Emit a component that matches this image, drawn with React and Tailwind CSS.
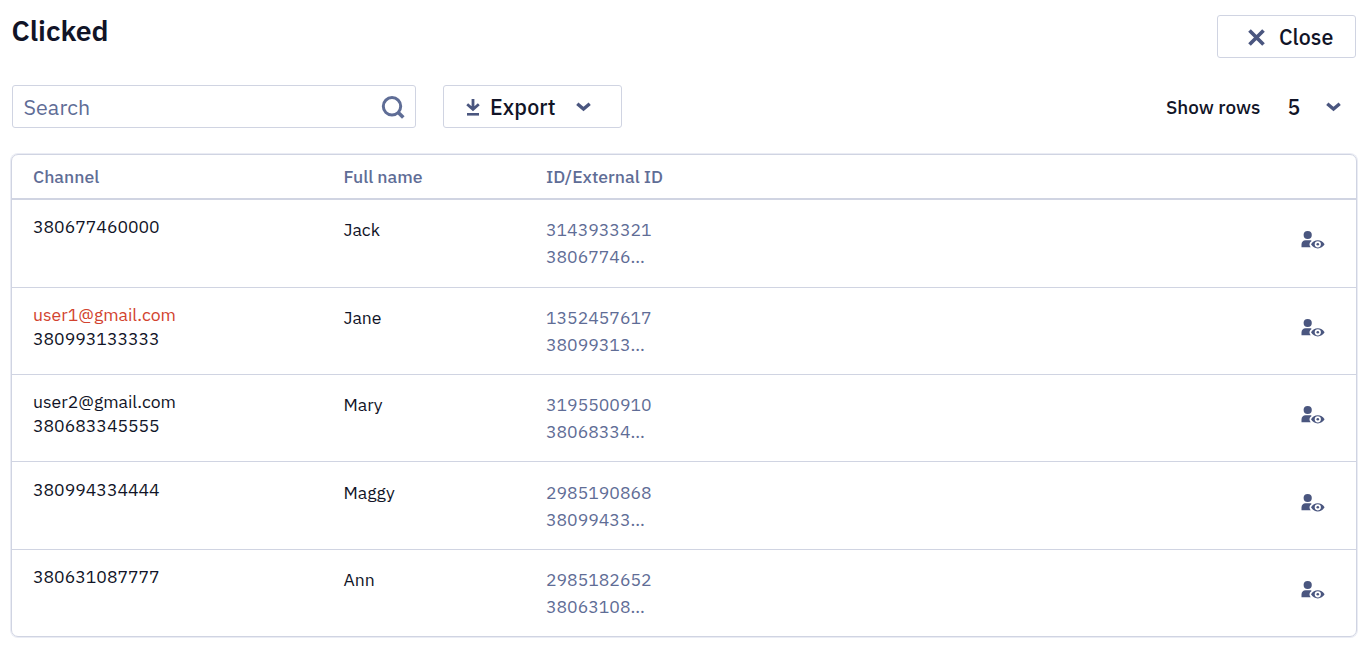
import React, { useState } from 'react';

const rows = [
  { channels: ['380677460000'], name: 'Jack', id: '3143933321', externalId: '38067746...', height: 'h-[88px]' },
  { channels: ['user1@gmail.com', '380993133333'], blocked: true, name: 'Jane', id: '1352457617', externalId: '38099313...', height: 'h-[87px]' },
  { channels: ['user2@gmail.com', '380683345555'], name: 'Mary', id: '3195500910', externalId: '38068334...', height: 'h-[87px]' },
  { channels: ['380994334444'], name: 'Maggy', id: '2985190868', externalId: '38099433...', height: 'h-[88px] pt-px' },
  { channels: ['380631087777'], name: 'Ann', id: '2985182652', externalId: '38063108...', height: 'h-[87px]' },
];

function ChevronIcon() {
  return (
    <svg width="15" height="10" viewBox="0 0 15 10" fill="none" stroke="#4a567f" strokeWidth="3.4">
      <path d="M1.3 1.8 L7.5 7.1 L13.7 1.8" />
    </svg>
  );
}

function ViewContactIcon() {
  return (
    <svg width="24" height="20" viewBox="0 0 24 20" fill="#4a567f">
      <circle cx="6.7" cy="5" r="4.1" />
      <path d="M0.5 17.3 V14.5 C0.5 12 2.2 10.3 4.6 10.3 H9.3 C10.2 10.3 10.5 10.6 10.6 10.9 C9.3 11.8 8.5 13 8.5 14.3 C8.5 15.5 9 16.5 9.8 17.3 Z" />
      <path fillRule="evenodd" d="M10 14.3 C11.6 11.7 14 10.2 16.8 10.2 C19.6 10.2 22 11.7 23.6 14.3 C22 16.9 19.6 18.4 16.8 18.4 C14 18.4 11.6 16.9 10 14.3 Z M16.8 11.2 A3.1 3.1 0 1 0 16.8 17.4 A3.1 3.1 0 1 0 16.8 11.2 Z" />
      <circle cx="16.8" cy="14.3" r="1.3" />
    </svg>
  );
}

export default function App() {
  const [search, setSearch] = useState('');

  return (
    <div className="h-[650px] w-[1367px] overflow-hidden bg-white pl-[11px] pr-[10px] font-['IBM_Plex_Sans',Roboto,sans-serif] text-[#111427]">
      <header className="flex h-[58px] items-start justify-between pl-px pr-px pt-[15px]">
        <h1 className="-ml-[0.5px] text-[28.4px] font-semibold leading-[31px]">Clicked</h1>
        <button className="flex h-[43px] w-[139px] items-center rounded-[3px] border border-[#d0d4e2] pl-[29.5px] pt-px text-[21.4px] font-medium tracking-[0.05px]">
          <svg width="17" height="17" viewBox="0 0 17 17" stroke="#4a567f" strokeWidth="3.7" className="mr-[14.5px]">
            <path d="M1.5 1.5 L15.5 15.5 M15.5 1.5 L1.5 15.5" />
          </svg>
          <span>Close</span>
        </button>
      </header>

      <div className="mt-[27px] flex h-[43px] items-center pl-px">
        <label className="flex h-[43px] w-[404px] items-center rounded-[3px] border border-[#d0d4e2] pl-[10.5px] pr-[10.5px] pt-px">
          <input
            className="min-w-0 flex-1 text-[21.4px] tracking-[0.1px] outline-none placeholder:text-[#5f6d96]"
            placeholder="Search"
            value={search}
            onChange={(e) => setSearch(e.target.value)}
          />
          <svg width="24" height="24" viewBox="0 0 24 24" fill="none" stroke="#5f6d96" strokeWidth="3">
            <circle cx="11" cy="11.3" r="8.7" />
            <path d="M17 17.3 L22.3 22.6" strokeWidth="3.6" />
          </svg>
        </label>
        <button className="ml-[27px] flex h-[43px] w-[179px] items-center rounded-[3px] border border-[#d0d4e2] pl-[22px] pt-px text-[21.4px] font-medium tracking-[0.15px]">
          <svg width="14" height="17" viewBox="0 0 14 17" fill="none" stroke="#4a567f" strokeWidth="2.8" className="mr-2.5">
            <path d="M7 0 V10 M1.2 5.3 L7 10.3 L12.8 5.3" />
            <path d="M1 15.3 H13" strokeWidth="2.6" />
          </svg>
          <span className="w-[86px] text-left">Export</span>
          <ChevronIcon />
        </button>
        <div className="ml-auto flex items-center pr-4 pt-px">
          <span className="w-[121.5px] text-[18.9px] font-medium">Show rows</span>
          <span className="w-[38.5px] text-[21.4px] font-medium">5</span>
          <ChevronIcon />
        </div>
      </div>

      <div className="mt-[26px] h-[483px] overflow-hidden rounded-[7px] border border-[#d0d4e2] shadow-[0_0_0_1px_#eaecf4]">
        <div className="grid h-[45px] grid-cols-[310.5px_202.5px_1fr] items-center border-b-2 border-[#d0d4e2] pl-[21px] pt-0.5 text-[17.6px] font-medium text-[#5f6d96]">
          <span>Channel</span>
          <span>Full name</span>
          <span>ID/External ID</span>
        </div>
        {rows.map((row) => (
          <div
            key={row.id}
            className={`grid grid-cols-[310.5px_202.5px_1fr_55px] border-b border-[#d0d4e2] pl-[21px] text-[17.6px] last:border-b-0 ${row.height}`}
          >
            <div className="pt-[15px] leading-6">
              {row.channels.map((channel, i) => (
                <div key={channel} className={row.blocked && i === 0 ? 'text-[#d2432f]' : ''}>
                  {channel}
                </div>
              ))}
            </div>
            <div className="pt-4 leading-[27px]">{row.name}</div>
            <div className="pt-4 leading-[27px] text-[#5f6d96]">
              <div>{row.id}</div>
              <div>{row.externalId}</div>
            </div>
            <button className="flex items-start pt-[30px]">
              <ViewContactIcon />
            </button>
          </div>
        ))}
      </div>
    </div>
  );
}
